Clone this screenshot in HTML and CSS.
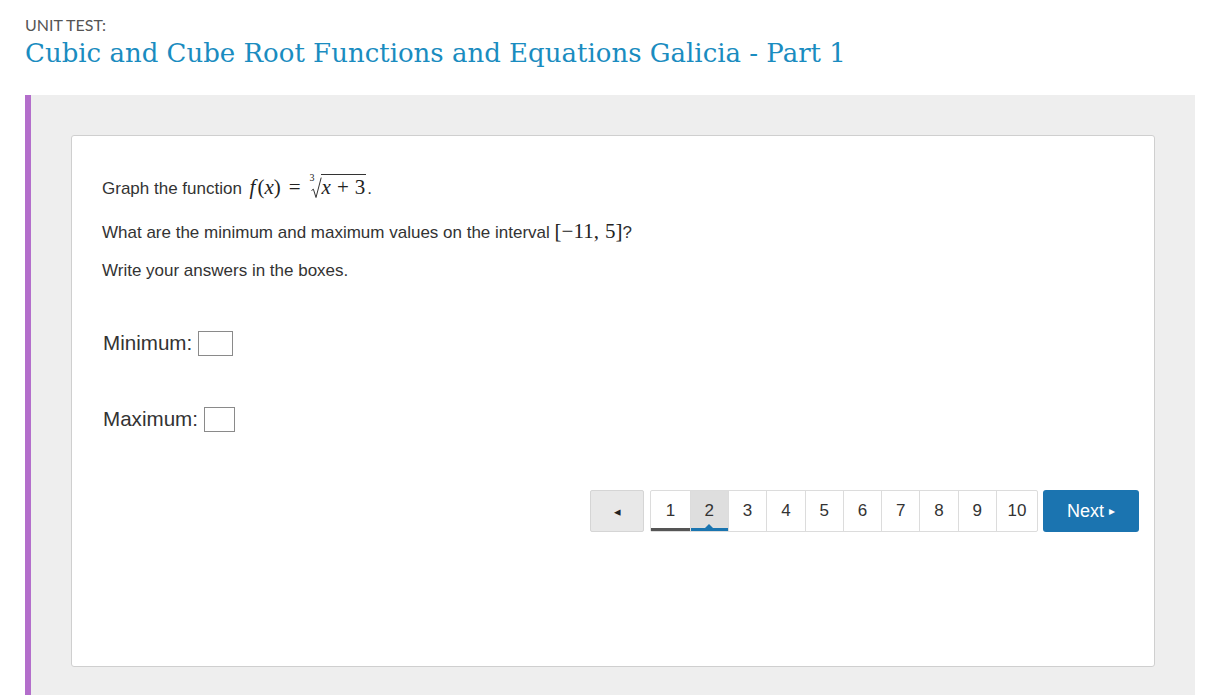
FILE: index.html
```html
<!DOCTYPE html>
<html>
<head>
<meta charset="utf-8">
<link rel="stylesheet" href="styles.css">
</head>
<body>
<header class="page-head">
  <div class="kicker">UNIT TEST:</div>
  <h1 class="title">Cubic and Cube Root Functions and Equations Galicia - Part 1</h1>
</header>
<section class="panel">
  <div class="card">
    <p class="q q1">Graph the function <span class="math fx"><i>f</i><span class="paren">(</span><i>x</i>)<span class="rel">=</span><span class="root"><span class="idx">3</span><svg class="rad" width="11" height="22" viewBox="0 0 11 22"><path d="M0.5 13.5 L2.4 12.2 L5 20.5 L10.2 0.6" fill="none" stroke="#333" stroke-width="1"/></svg><span class="rad-body"><i>x</i><span class="bin">+</span>3</span></span></span><span class="dot">.</span></p>
    <p class="q q2">What are the minimum and maximum values on the interval <span class="math">[−11,<span class="sp"></span>5]</span>?</p>
    <p class="q q3">Write your answers in the boxes.</p>
    <div class="answer first"><span class="lbl">Minimum:</span><span class="box"></span></div>
    <div class="answer second"><span class="lbl">Maximum:</span><span class="box wide"></span></div>
    <nav class="pager">
      <button class="prev">◂</button>
      <ol class="pages">
        <li class="pg done">1</li>
        <li class="pg cur">2</li>
        <li class="pg">3</li>
        <li class="pg">4</li>
        <li class="pg">5</li>
        <li class="pg">6</li>
        <li class="pg">7</li>
        <li class="pg">8</li>
        <li class="pg">9</li>
        <li class="pg">10</li>
      </ol>
      <button class="next">Next <span class="tri">▸</span></button>
    </nav>
  </div>
</section>
</body>
</html>
```
FILE: styles.css
```css
html, body { margin: 0; padding: 0; background: #fff; }
body { font-family: "Liberation Sans", Arial, sans-serif; color: #333; overflow: hidden; height: 695px; }

.page-head { padding: 15px 25px 0 25px; height: 95px; box-sizing: border-box; }
.kicker { font-family: Lato, "Open Sans", sans-serif; font-size: 16px; color: #555; line-height: 20px; }
.title { margin: 1px 0 0 0; font-family: "DejaVu Serif", "Liberation Serif", serif; font-weight: normal; font-size: 26px; line-height: 34px; color: #1a8cc0; }

.panel { margin: 0 21px 0 25px; background: #eeeeee; border-left: 6px solid #b36ecb; padding: 40px 40px 0 40px; height: 600px; box-sizing: border-box; }
.card { background: #fff; border: 1px solid #cfcfcf; border-radius: 3px; height: 532px; box-sizing: border-box; padding: 38px 15px 0 30px; }

.q { margin: 0; font-size: 17px; line-height: 26px; height: 26px; color: #333; white-space: nowrap; }
.q1 { margin-bottom: 18px; }
.q2 { margin-bottom: 14px; }
.math { font-family: "Liberation Serif", "Times New Roman", serif; font-size: 21px; color: #222; }
.math i { font-style: italic; }
.fx { margin-left: 3px; }
.paren { margin-left: 2px; }
.rel { margin: 0 8px; }
.bin { margin: 0 6px; }
.sp { display: inline-block; width: 6px; }
.dot { margin-left: 1px; }
.root { display: inline-block; position: relative; padding-left: 2px; }
.idx { position: absolute; left: 1px; top: -1px; font-size: 10px; line-height: 10px; }
.rad { vertical-align: -5px; }
.rad-body { border-top: 1px solid #333; padding: 0 1px; margin-left: -1px; }

.answer { display: flex; align-items: center; height: 26px; }
.answer.first { margin-top: 46px; }
.answer.second { margin-top: 50px; }
.lbl { font-size: 20.6px; color: #333; margin-left: 1px; }
.box { display: inline-block; width: 33px; height: 23px; border: 1px solid #8a8a8a; margin-left: 6px; background: #fff; }
.box.wide { width: 29px; margin-left: 6px; }

.pager { display: flex; justify-content: flex-end; align-items: stretch; margin-top: 58px; height: 42px; gap: 6px; }
.prev { width: 54px; background: #e8e8e8; border: 1px solid #d5d5d5; border-radius: 2px; color: #222; font-size: 13px; padding: 0; font-family: "DejaVu Sans", sans-serif; }
.pages { display: flex; list-style: none; margin: 0; padding: 0; border: 1px solid #dcdcdc; border-radius: 2px; }
.pg { width: 38.3px; display: flex; align-items: center; justify-content: center; font-size: 17px; color: #333; border-left: 1px solid #dcdcdc; position: relative; box-sizing: border-box; }
.pg:first-child { border-left: none; }
.pg:last-child { width: 41px; }
.pg.done { box-shadow: inset 0 -3px 0 #555; }
.pg.cur { background: #dedede; box-shadow: inset 0 -3px 0 #1a75b0; }
.pg.cur::after { content: ""; position: absolute; left: 50%; bottom: 3px; margin-left: -4px; border-left: 4px solid transparent; border-right: 4px solid transparent; border-bottom: 4px solid #1a75b0; }
.next { margin-left: -1px; width: 96px; background: #1b74b0; border: none; border-radius: 3px; color: #fff; font-family: "Liberation Sans", Arial, sans-serif; font-size: 18px; padding: 0; }
.tri { font-size: 12px; font-family: "DejaVu Sans", sans-serif; vertical-align: 2px; }
```
